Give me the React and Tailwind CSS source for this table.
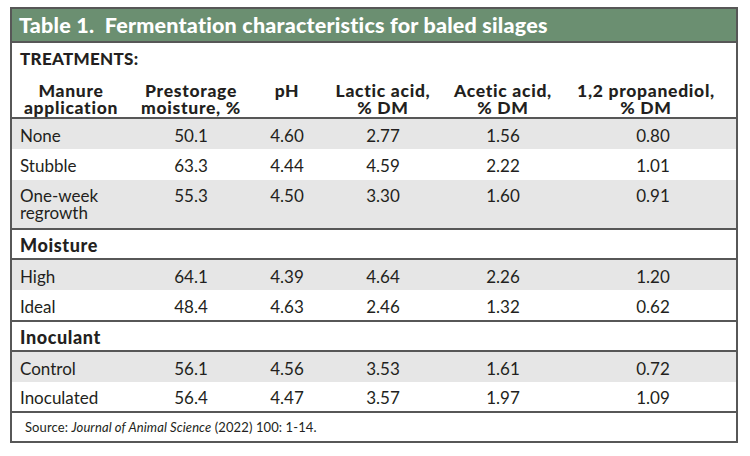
import React from 'react';

const cols = 'grid grid-cols-[118px_122px_70px_122px_118px_1fr]';

const groups = [
  {
    title: null,
    rows: [
      { label: 'None', vals: ['50.1', '4.60', '2.77', '1.56', '0.80'], shade: true, h: 'h-[30px]' },
      { label: 'Stubble', vals: ['63.3', '4.44', '4.59', '2.22', '1.01'], shade: false, h: 'h-[31px]' },
      { label: ['One-week', 'regrowth'], vals: ['55.3', '4.50', '3.30', '1.60', '0.91'], shade: true, h: 'h-[48px]' },
    ],
  },
  {
    title: 'Moisture',
    rows: [
      { label: 'High', vals: ['64.1', '4.39', '4.64', '2.26', '1.20'], shade: true, h: 'h-[30px]' },
      { label: 'Ideal', vals: ['48.4', '4.63', '2.46', '1.32', '0.62'], shade: false, h: 'h-[30px]' },
    ],
  },
  {
    title: 'Inoculant',
    rows: [
      { label: 'Control', vals: ['56.1', '4.56', '3.53', '1.61', '0.72'], shade: true, h: 'h-[30px]' },
      { label: 'Inoculated', vals: ['56.4', '4.47', '3.57', '1.97', '1.09'], shade: false, h: 'h-[29px]' },
    ],
  },
];

const headers = [
  ['Manure', 'application'],
  ['Prestorage', 'moisture, %'],
  ['pH'],
  ['Lactic acid,', '% DM'],
  ['Acetic acid,', '% DM'],
  ['1,2 propanediol,', '% DM'],
];

const DataRow = ({ row }) => {
  const multi = Array.isArray(row.label);
  return (
    <div className={`${cols} ${row.h} ${row.shade ? 'bg-[#e6e6e6]' : 'bg-white'} ${multi ? 'items-start pt-[7px]' : 'items-center pt-[2px]'} text-[17px] leading-[17px]`}>
      <div className="pl-[8px]">
        {multi ? row.label.map((l) => <div key={l}>{l}</div>) : row.label}
      </div>
      {row.vals.map((v, i) => (
        <div key={i} className={`text-center ${i === 4 ? 'pl-[8px]' : ''}`}>{v}</div>
      ))}
    </div>
  );
};

export default function App() {
  return (
    <div className="w-[750px] h-[456px] bg-white pt-[7px] pl-[10px] font-['Lato',sans-serif] text-[#231f20]">
      <div className="w-[728px] border-2 border-[#575757]">
        <div className="h-[34px] bg-[#6b8f71] border-b-2 border-[#575757] flex items-center pl-[7px] pt-[1px]">
          <span className="text-white font-black text-[21.5px] tracking-[0.2px] whitespace-pre">Table 1.  Fermentation characteristics for baled silages</span>
        </div>

        <div className="h-[29px] flex items-center pl-[8px] pt-[2px] font-black text-[17px] tracking-[0.3px]">TREATMENTS:</div>

        <div className={`${cols} h-[47px] items-start pt-[10px] font-black text-[17.5px] leading-[17px] tracking-[0.7px] border-b-2 border-[#575757]`}>
          {headers.map((h, i) => (
            <div key={i} className={`text-center ${i === 5 ? 'pr-[6px]' : ''}`}>
              {h.map((l) => <div key={l}>{l}</div>)}
            </div>
          ))}
        </div>

        {groups.map((g, gi) => (
          <div key={gi} className={gi > 0 ? 'border-t-2 border-[#575757]' : ''}>
            {g.title && (
              <div className="h-[30px] flex items-center pl-[8px] pt-[2px] font-black text-[18px] tracking-[0.6px] border-b-2 border-[#575757]">{g.title}</div>
            )}
            {g.rows.map((r, ri) => <DataRow key={ri} row={r} />)}
          </div>
        ))}

        <div className="h-[30px] border-t-2 border-[#575757] flex items-center pl-[13px] pt-[1px] text-[13px] tracking-[0.1px]">
          <span>Source: <i>Journal of Animal Science</i> (2022) 100: 1-14.</span>
        </div>
      </div>
    </div>
  );
}
